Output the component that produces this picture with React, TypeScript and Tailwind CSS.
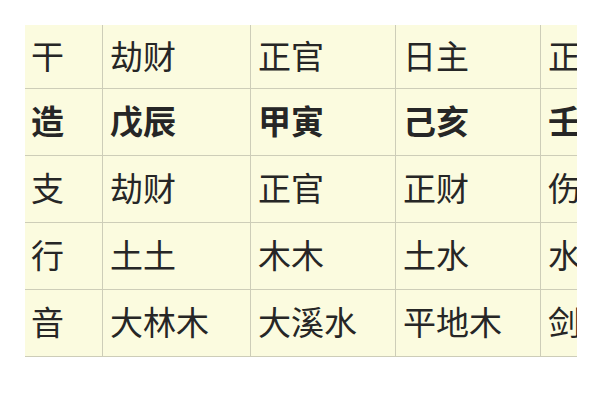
const rows: { label: string; cells: string[]; bold?: boolean }[] = [
  { label: '干', cells: ['劫财', '正官', '日主', '正财'] },
  { label: '造', cells: ['戊辰', '甲寅', '己亥', '壬申'], bold: true },
  { label: '支', cells: ['劫财', '正官', '正财', '伤官'] },
  { label: '行', cells: ['土土', '木木', '土水', '水金'] },
  { label: '音', cells: ['大林木', '大溪水', '平地木', '剑锋金'] },
];

const widths = ['w-[148px]', 'w-[145px]', 'w-[145px]', 'w-[145px]'];

export default function App() {
  return (
    <div
      className="w-[600px] h-[400px] bg-white pt-[25px] pl-[25px] text-[#262626]"
      style={{ fontFamily: '"Noto Sans CJK SC", "Noto Sans", sans-serif' }}
    >
      <div className="w-[552px] overflow-hidden bg-[#fbfbdf]">
        {rows.map((row, i) => (
          <div
            key={row.label}
            className={`flex border-b border-[#cdcdb8] ${i === 0 ? 'h-[64px]' : 'h-[67px]'} ${
              row.bold ? 'font-bold' : 'font-normal'
            }`}
          >
            <div className="w-[78px] shrink-0 border-r border-[#cdcdb8] flex items-center pl-[6px] pb-[3px] text-[33px] leading-none">
              {row.label}
            </div>
            {row.cells.map((c, j) => (
              <div
                key={j}
                className={`${widths[j]} shrink-0 border-r border-[#cdcdb8] flex items-center pl-[7px] pb-[3px] text-[33px] leading-none whitespace-nowrap`}
              >
                {c}
              </div>
            ))}
          </div>
        ))}
      </div>
    </div>
  );
}
